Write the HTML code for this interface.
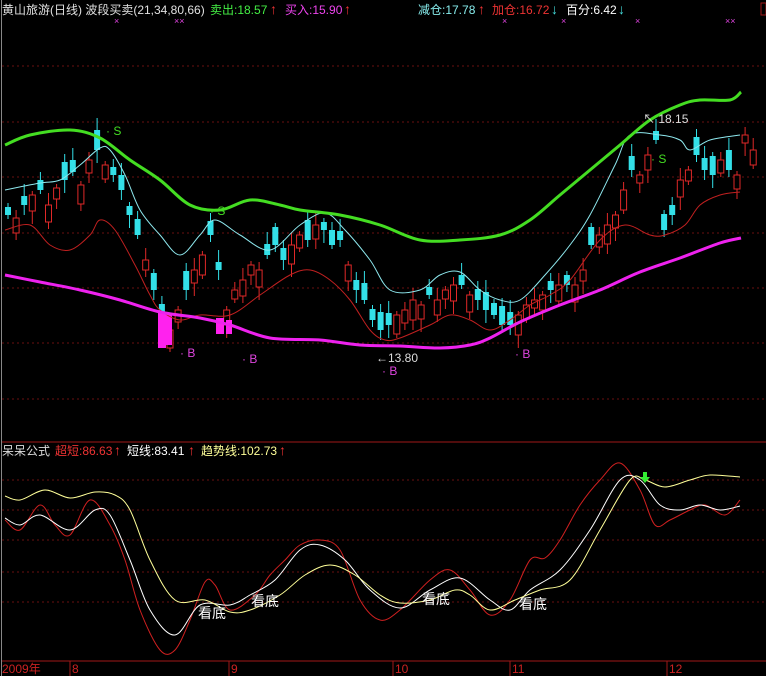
<!DOCTYPE html>
<html><head><meta charset="utf-8">
<style>
html,body{margin:0;padding:0;background:#000;}
body{width:766px;height:676px;overflow:hidden;}
svg{display:block;}
text{font-family:"Liberation Sans","Noto Sans CJK SC",sans-serif;}
</style></head>
<body>
<svg id="s" width="766" height="676" viewBox="0 0 766 676" xmlns="http://www.w3.org/2000/svg">
<rect width="766" height="676" fill="#000"/>
<line x1="1.5" y1="0" x2="1.5" y2="676" stroke="#888" stroke-width="1"/>
<g stroke="#6a1010" stroke-dasharray="2,3" stroke-width="1">
<line x1="2" y1="66" x2="766" y2="66"/><line x1="2" y1="122" x2="766" y2="122"/>
<line x1="2" y1="177" x2="766" y2="177"/><line x1="2" y1="233" x2="766" y2="233"/>
<line x1="2" y1="288" x2="766" y2="288"/><line x1="2" y1="343" x2="766" y2="343"/>
<line x1="2" y1="399" x2="766" y2="399"/>
<line x1="2" y1="480" x2="766" y2="480"/><line x1="2" y1="510" x2="766" y2="510"/>
<line x1="2" y1="540" x2="766" y2="540"/><line x1="2" y1="572" x2="766" y2="572"/>
<line x1="2" y1="602" x2="766" y2="602"/>
</g>
<line x1="2" y1="442" x2="766" y2="442" stroke="#a01818"/>
<line x1="2" y1="661" x2="766" y2="661" stroke="#a01818"/>
<g stroke="#a01818">
<line x1="70" y1="661" x2="70" y2="676"/><line x1="229" y1="661" x2="229" y2="676"/>
<line x1="393" y1="661" x2="393" y2="676"/><line x1="510" y1="661" x2="510" y2="676"/>
<line x1="667" y1="661" x2="667" y2="676"/>
</g>
<g id="candles"></g>
<g id="lines" fill="none" stroke-linejoin="round">
<polyline stroke="#c02020" stroke-width="1" points="5,230 30,225 50,245 70,250 90,235 100,220 115,230 135,265 150,295 160,310 180,320 200,315 230,315 260,295 290,275 310,270 330,280 350,300 370,330 385,340 400,338 430,325 450,315 470,320 490,330 510,320 530,305 550,295 570,280 600,240 625,225 650,235 665,235 685,225 700,205 720,195 740,192"/>
<polyline stroke="#8ee8ee" stroke-width="1" points="5,190 40,183 60,180 80,165 100,148 110,150 125,175 140,210 160,235 180,255 200,235 215,220 240,235 270,250 300,225 325,213 345,230 370,260 390,290 420,290 440,275 460,272 480,290 500,300 520,300 545,275 570,245 590,215 615,165 630,135 660,135 680,140 690,150 710,140 740,135"/>
<polyline stroke="#44dd22" stroke-width="3" points="5,145 30,135 70,130 100,138 130,160 160,180 190,205 220,210 250,200 280,205 300,210 340,215 380,225 420,240 460,240 500,235 530,220 560,195 590,170 620,145 650,120 680,105 700,100 730,100 741,92"/>
<polyline stroke="#ee22ee" stroke-width="3" points="5,275 40,282 80,290 120,300 160,312 200,318 230,325 270,338 320,340 360,345 400,346 440,348 470,345 490,338 520,322 560,305 600,290 640,272 680,258 720,243 741,238"/>
<polyline stroke="#d02020" stroke-width="1" points="5,520 20,530 40,505 55,525 70,535 90,500 110,525 125,560 140,610 160,650 175,650 190,620 205,582 215,585 230,610 255,595 270,575 285,560 300,545 320,540 340,550 360,600 380,620 400,610 430,580 450,570 470,590 490,615 510,600 530,560 545,558 560,540 580,505 600,480 620,463 640,490 655,525 670,520 690,510 705,505 725,515 740,500"/>
<polyline stroke="#ffffff" stroke-width="1" points="5,518 20,525 40,515 70,530 95,510 110,515 130,560 150,610 175,635 200,605 230,605 250,595 275,580 300,550 320,545 345,560 370,590 400,608 430,590 460,578 490,600 510,610 530,590 560,570 590,530 620,480 640,480 660,505 680,510 700,505 720,510 740,506"/>
<polyline stroke="#ffff99" stroke-width="1" points="5,496 20,500 45,490 70,498 95,492 115,495 130,510 150,560 175,600 205,600 230,612 250,610 280,595 305,575 330,565 355,575 380,595 400,603 430,600 455,590 470,595 490,610 515,600 540,590 570,580 600,530 630,480 645,480 665,487 690,480 710,475 740,477"/>
</g>
<g font-size="12" fill="#dd44dd">
<text x="114" y="24" font-size="9">×</text><text x="174" y="24" font-size="9">××</text>
<text x="502" y="24" font-size="9">×</text><text x="561" y="24" font-size="9">×</text>
<text x="635" y="24" font-size="9">×</text><text x="725" y="24" font-size="9">××</text>
</g>
<g font-size="12">
<text x="2" y="14" fill="#e0e0e0">黄山旅游(日线) 波段买卖(21,34,80,66)</text>
<text x="210" y="14" fill="#44ee44">卖出:18.57</text><text x="270" y="14" fill="#ee3333" font-size="14">↑</text>
<text x="285" y="14" fill="#ee44ee">买入:15.90</text><text x="344" y="14" fill="#ee3333" font-size="14">↑</text>
<text x="418" y="14" fill="#88eeee">减仓:17.78</text><text x="478" y="14" fill="#ee3333" font-size="14">↑</text>
<text x="492" y="14" fill="#ee3333">加仓:16.72</text><text x="551" y="14" fill="#44dddd" font-size="14">↓</text>
<text x="566" y="14" fill="#ffffff">百分:6.42</text><text x="618" y="14" fill="#44dddd" font-size="14">↓</text>
<rect x="761" y="3" width="5" height="12" fill="none" stroke="#a01818"/>
<text x="2" y="455" fill="#dddddd">呆呆公式</text>
<text x="55" y="455" fill="#ee3333">超短:86.63</text><text x="114" y="455" fill="#ee3333" font-size="14">↑</text>
<text x="127" y="455" fill="#ffffff">短线:83.41</text><text x="188" y="455" fill="#ee3333" font-size="14">↑</text>
<text x="201" y="455" fill="#ffff99">趋势线:102.73</text><text x="279" y="455" fill="#ee3333" font-size="14">↑</text>
<text x="2" y="673" fill="#cc2222">2009年</text>
<text x="72" y="673" fill="#cc2222">8</text><text x="231" y="673" fill="#cc2222">9</text>
<text x="395" y="673" fill="#cc2222">10</text><text x="512" y="673" fill="#cc2222">11</text>
<text x="669" y="673" fill="#cc2222">12</text>
<text x="106" y="135" fill="#44dd22">· S</text><text x="210" y="215" fill="#44dd22">· S</text>
<text x="651" y="163" fill="#44dd22">· S</text>
<text x="180" y="357" fill="#dd44dd">· B</text><text x="242" y="363" fill="#dd44dd">· B</text>
<text x="382" y="375" fill="#dd44dd">· B</text><text x="515" y="358" fill="#dd44dd">· B</text>
<text x="376" y="362" fill="#dddddd">←13.80</text>
<text x="643" y="123" fill="#dddddd">↖ 18.15</text>
<text x="198" y="618" fill="#ffffff" font-size="14">看底</text>
<text x="251" y="606" fill="#ffffff" font-size="14">看底</text>
<text x="422" y="604" fill="#ffffff" font-size="14">看底</text>
<text x="519" y="609" fill="#ffffff" font-size="14">看底</text>
<path d="M643,472 h4 v5 h3 l-5,6 l-5,-6 h3z" fill="#33ee33"/>
</g>
</svg>
<script>
var c=[215,218,205,195,190,205,188,180,172,185,160,150,165,175,190,215,235,260,290,315,330,310,290,270,255,235,270,310,290,280,265,270,255,245,260,245,235,240,225,230,245,240,265,290,300,320,330,325,315,310,300,305,295,300,290,285,285,295,300,310,315,325,325,315,305,300,295,290,285,285,285,270,245,235,225,215,190,170,175,155,140,230,215,180,170,155,170,175,160,170,175,135,150];
var g=document.getElementById('candles'),ns='http://www.w3.org/2000/svg';
for(var i=0;i<c.length;i++){
 var x=5+i*8.1,cl=c[i];
 var nxt=i+1<c.length?c[i+1]:cl, pv=i>0?c[i-1]:cl;
 var mag=8+((i*7)%13);
 var dir=(nxt<pv)?1:-1; if(i%5==2)dir=-dir;
 var o=cl+dir*mag;
 var up=cl<o,col=up?'#e02828':'#33e0e8';
 var t=Math.min(o,cl),b=Math.max(o,cl);
 var w=document.createElementNS(ns,'line');
 w.setAttribute('x1',x+3);w.setAttribute('x2',x+3);
 w.setAttribute('y1',t-4-(i%3)*4);w.setAttribute('y2',b+4+(i%4)*3);
 w.setAttribute('stroke',col);g.appendChild(w);
 var r=document.createElementNS(ns,'rect');
 r.setAttribute('x',x);r.setAttribute('y',t);r.setAttribute('width',6);r.setAttribute('height',b-t);
 if(up){r.setAttribute('fill','#000');r.setAttribute('stroke',col);}else{r.setAttribute('fill',col);}
 g.appendChild(r);
}
var m=[[158,312,8,36],[166,315,6,30],[216,318,8,16],[226,320,6,14]];
m.forEach(function(a){var r=document.createElementNS(ns,'rect');r.setAttribute('x',a[0]);r.setAttribute('y',a[1]);r.setAttribute('width',a[2]);r.setAttribute('height',a[3]);r.setAttribute('fill','#ff22ee');g.appendChild(r);});
// smooth polylines
var pls=document.querySelectorAll('#lines polyline');
pls.forEach(function(pl){
 var p=pl.getAttribute('points').trim().split(/\s+/).map(function(s){return s.split(',').map(Number);});
 var d='M'+p[0][0]+','+p[0][1];
 for(var i=0;i<p.length-1;i++){
  var p0=p[i-1]||p[i],p1=p[i],p2=p[i+1],p3=p[i+2]||p2;
  var c1x=p1[0]+(p2[0]-p0[0])/6,c1y=p1[1]+(p2[1]-p0[1])/6;
  var c2x=p2[0]-(p3[0]-p1[0])/6,c2y=p2[1]-(p3[1]-p1[1])/6;
  d+=' C'+c1x.toFixed(1)+','+c1y.toFixed(1)+' '+c2x.toFixed(1)+','+c2y.toFixed(1)+' '+p2[0]+','+p2[1];
 }
 var path=document.createElementNS(ns,'path');
 path.setAttribute('d',d);path.setAttribute('stroke',pl.getAttribute('stroke'));path.setAttribute('stroke-width',pl.getAttribute('stroke-width'));path.setAttribute('fill','none');
 pl.parentNode.replaceChild(path,pl);
});
</script>
</body></html>
